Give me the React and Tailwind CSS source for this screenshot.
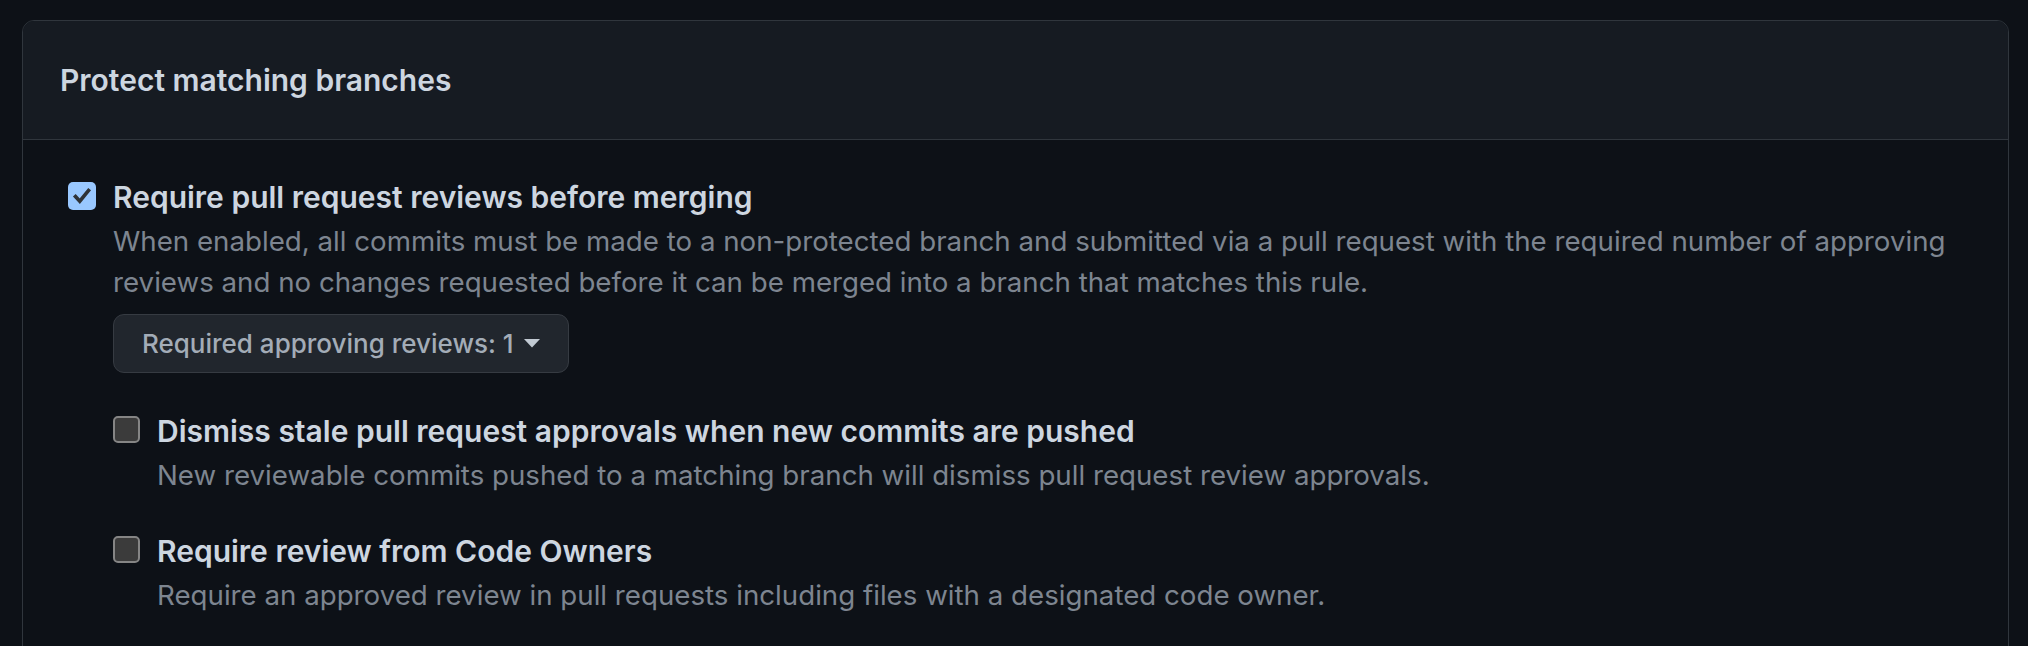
import React from 'react'

function CheckBox({ checked }) {
  if (checked) {
    return (
      <div className="w-[28px] h-[28px] shrink-0 rounded-[5px] bg-[#99c8ff] flex items-center justify-center">
        <svg width="28" height="28" viewBox="0 0 28 28">
          <path d="M7.5 14.5 L11.8 19.2 L20.5 8.5" fill="none" stroke="#2f3337" strokeWidth="3.6" strokeLinecap="square" strokeLinejoin="miter" />
        </svg>
      </div>
    )
  }
  return <div className="w-[27px] h-[27px] shrink-0 rounded-[5px] bg-[#3b3b3b] border-[2px] border-[#858585]" />
}

function Option({ checked, title, children, extra }) {
  return (
    <div className="flex items-start gap-[17px]">
      <div className="pt-[5px]">
        <CheckBox checked={checked} />
      </div>
      <div className="flex flex-col">
        <div className="text-[30px] leading-[40px] font-semibold text-[#cdd6e0]">{title}</div>
        <p className="mt-[4px] text-[27.7px] leading-[41px] text-[#7d8590]">{children}</p>
        {extra}
      </div>
    </div>
  )
}

export default function App() {
  return (
    <div className="min-h-screen bg-[#0d1117] pt-[20px] pb-[40px] font-['Inter',sans-serif]">
      <div className="ml-[22px] w-[1987px] rounded-[12px] border border-[#30363d] overflow-hidden">
        <div className="h-[119px] bg-[#161b22] border-b border-[#30363d] px-[37px] flex items-center">
          <h3 className="text-[30px] font-semibold text-[#cdd6e0]">Protect matching branches</h3>
        </div>
        <div className="pt-[37px] pl-[45px] pr-[40px] pb-[80px]">
          <Option
            checked
            title="Require pull request reviews before merging"
            extra={
              <div className="mt-[11px]">
                <button className="h-[59px] px-[28px] rounded-[11px] bg-[#21262d] border border-[#363b42] flex items-center gap-[10px] text-[26px] font-medium text-[#a3acb7]">
                  <span>Required approving reviews: 1</span>
                  <svg width="16" height="9" viewBox="0 0 16 9">
                    <path d="M0 0 H16 L8 8.5 Z" fill="#c2cad3" />
                  </svg>
                </button>
                <div className="mt-[38px] flex flex-col gap-[35px]">
                  <Option title="Dismiss stale pull request approvals when new commits are pushed">
                    New reviewable commits pushed to a matching branch will dismiss pull request review approvals.
                  </Option>
                  <Option title="Require review from Code Owners">
                    Require an approved review in pull requests including files with a designated code owner.
                  </Option>
                </div>
              </div>
            }
          >
            When enabled, all commits must be made to a non-protected branch and submitted via a pull request with the required number of approving reviews and no changes requested before it can be merged into a branch that matches this rule.
          </Option>
        </div>
      </div>
    </div>
  )
}
